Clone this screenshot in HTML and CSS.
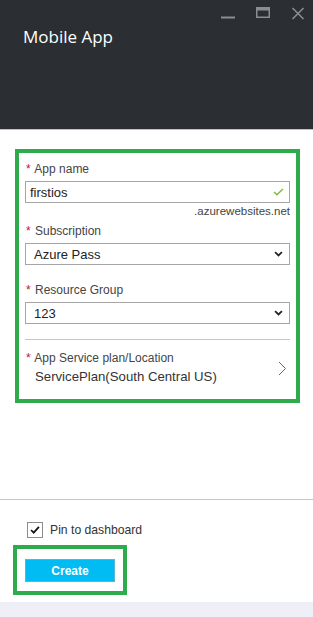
FILE: index.html
```html
<!DOCTYPE html>
<html lang="en">
<head>
  <meta charset="UTF-8">
  <meta name="viewport" content="width=device-width, initial-scale=1.0">
  <title>Mobile App</title>
  <link rel="stylesheet" href="styles.css">
</head>
<body>
  <header class="blade-header">
    <div class="window-controls">
      <svg class="control" viewBox="0 0 16 16" aria-label="Minimize">
        <path d="M1 12.5h14" stroke="currentColor" stroke-width="2" fill="none"/>
      </svg>
      <svg class="control" viewBox="0 0 16 16" aria-label="Maximize">
        <rect x="1.75" y="2.75" width="12.5" height="9.5" stroke="currentColor" stroke-width="1.5" fill="none"/>
        <rect x="1" y="2" width="14" height="3.5" fill="currentColor"/>
      </svg>
      <svg class="control" viewBox="0 0 16 16" aria-label="Close">
        <path d="M2.5 3l11 11M13.5 3l-11 11" stroke="currentColor" stroke-width="1.6" fill="none"/>
      </svg>
    </div>
    <h1 class="blade-title">Mobile App</h1>
  </header>

  <main class="blade-content">
    <div class="form-box">
      <div class="field-label first"><span class="req">*</span> App name</div>
      <div class="text-input">
        <span class="value">firstios</span>
        <svg class="valid" viewBox="0 0 12 9">
          <path d="M1 4.5l3.2 3.2L11 1" stroke="currentColor" stroke-width="1.6" fill="none"/>
        </svg>
      </div>
      <div class="suffix">.azurewebsites.net</div>

      <div class="field-label"><span class="req">*</span> Subscription</div>
      <div class="dropdown">
        <span class="value">Azure Pass</span>
        <svg class="arrow" viewBox="0 0 10 7">
          <path d="M1 1.2l4 4 4-4" stroke="currentColor" stroke-width="2" fill="none"/>
        </svg>
      </div>

      <div class="field-label spaced"><span class="req">*</span> Resource Group</div>
      <div class="dropdown">
        <span class="value">123</span>
        <svg class="arrow" viewBox="0 0 10 7">
          <path d="M1 1.2l4 4 4-4" stroke="currentColor" stroke-width="2" fill="none"/>
        </svg>
      </div>

      <hr class="divider">

      <div class="picker-row">
        <div>
          <div class="field-label tight"><span class="req">*</span> App Service plan/Location</div>
          <div class="picker-value">ServicePlan(South Central US)</div>
        </div>
        <svg class="chevron" viewBox="0 0 9 15">
          <path d="M1 1l6.5 6.5L1 14" stroke="currentColor" stroke-width="1" fill="none"/>
        </svg>
      </div>
    </div>
  </main>

  <footer class="blade-footer">
    <label class="pin">
      <span class="checkbox">
        <svg viewBox="0 0 16 16">
          <path d="M3.5 8l3 3 6-6.5" stroke="currentColor" stroke-width="2" fill="none"/>
        </svg>
      </span>
      Pin to dashboard
    </label>
    <div class="create-box">
      <button class="btn-create">Create</button>
    </div>
  </footer>
  <div class="bottom-band"></div>
</body>
</html>
```

FILE: styles.css
```css
body {
  font-family: "Liberation Sans", Arial, sans-serif;
  margin: 0;
  padding: 0;
  height: 100vh;
  display: flex;
  flex-direction: column;
  background-color: #ffffff;
  color: #444444;
}

.blade-header {
  height: 129px;
  background-color: #2b2e33;
  border-bottom: 1px solid #bfc1c4;
  flex-shrink: 0;
}

.window-controls {
  display: flex;
  justify-content: flex-end;
  gap: 19px;
  padding: 5px 7px 0 0;
  color: #8a8d91;
}

.control {
  width: 16px;
  height: 16px;
}

.blade-title {
  margin: 5px 0 0 23px;
  font-family: "Open Sans", "Segoe UI", sans-serif;
  font-size: 17px;
  font-weight: 400;
  line-height: 22px;
  color: #ffffff;
}

.blade-content {
  flex: 1;
}

.form-box {
  margin: 19px 13px 0 15px;
  border: 4px solid #2eac4c;
  padding: 7px 6px 12px;
}

.field-label {
  font-size: 12px;
  line-height: 18px;
  color: #444444;
  margin-top: 3px;
  margin-bottom: 3px;
}

.field-label.first {
  margin-top: 0;
}

.field-label.spaced {
  margin-top: 16px;
}

.field-label.tight {
  margin: 0;
}

.req {
  color: #c8103a;
  margin: 0 1px 0 1px;
}

.text-input,
.dropdown {
  height: 22px;
  box-sizing: border-box;
  border: 1px solid #a6a6a6;
  display: flex;
  align-items: center;
  justify-content: space-between;
  font-size: 13px;
  color: #222222;
}

.text-input {
  padding: 0 5px 0 4px;
}

.dropdown {
  padding: 0 6px 0 8px;
}

.valid {
  width: 11px;
  height: 8px;
  color: #7fba3a;
}

.arrow {
  width: 9px;
  height: 6px;
  color: #222222;
}

.suffix {
  text-align: right;
  font-size: 11.5px;
  line-height: 16px;
  color: #444444;
}

.divider {
  border: none;
  border-top: 1px solid #c6c6c6;
  margin: 15px 0 9px;
}

.picker-row {
  display: flex;
  align-items: center;
  justify-content: space-between;
}

.picker-value {
  margin-left: 10px;
  font-size: 13.2px;
  line-height: 20px;
  color: #333333;
}

.chevron {
  width: 9px;
  height: 15px;
  margin-right: 3px;
  color: #666666;
}

.blade-footer {
  border-top: 1px solid #c6c6c6;
  padding-top: 22px;
  flex-shrink: 0;
}

.pin {
  display: flex;
  align-items: center;
  gap: 7px;
  margin-left: 27px;
  font-size: 12.2px;
  line-height: 16px;
  color: #333333;
}

.checkbox {
  width: 16px;
  height: 16px;
  box-sizing: border-box;
  border: 1px solid #8c8c8c;
  display: flex;
  align-items: center;
  justify-content: center;
  color: #111111;
}

.checkbox svg {
  width: 14px;
  height: 14px;
}

.create-box {
  width: 114px;
  height: 50px;
  box-sizing: border-box;
  margin: 7px 0 7px 13px;
  border: 4px solid #2eac4c;
  padding: 10px 0 0 8px;
}

.btn-create {
  display: block;
  width: 90px;
  height: 23px;
  padding: 0;
  border: 1px solid #5ab4d6;
  background-color: #00bcf2;
  color: #ffffff;
  font-family: "Liberation Sans", Arial, sans-serif;
  font-size: 12px;
  font-weight: 700;
  cursor: pointer;
}

.bottom-band {
  height: 15px;
  background-color: #efeff7;
  flex-shrink: 0;
}
```
